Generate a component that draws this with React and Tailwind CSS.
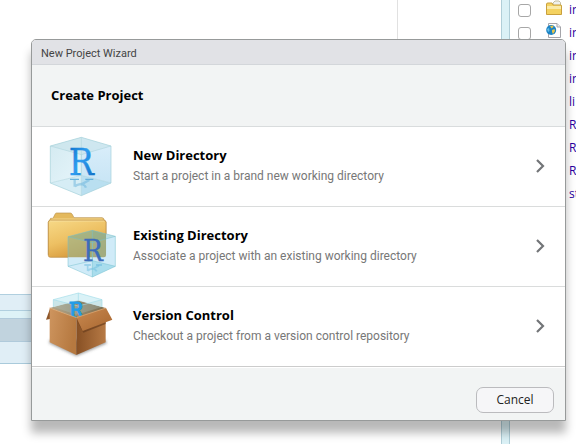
import React from 'react';

const R_FONT = '"DejaVu Serif Condensed", "DejaVu Serif", serif';

function CubeIcon() {
  return (
    <svg className="h-[79px] w-20 shrink-0" viewBox="30 21 240 237" aria-hidden="true">
      <defs>
        <linearGradient id="rBlue" x1="0" y1="0" x2="1" y2="1">
          <stop offset="0" stopColor="#0a6cc4" />
          <stop offset=".45" stopColor="#2f9df0" />
          <stop offset="1" stopColor="#0a68bd" />
        </linearGradient>
        <linearGradient id="cubeLeft" x1="0" y1="0" x2="1" y2="1">
          <stop offset="0" stopColor="#d3eaf1" />
          <stop offset="1" stopColor="#e6f5fa" />
        </linearGradient>
        <linearGradient id="cubeRight" x1="0" y1="0" x2="0" y2="1">
          <stop offset="0" stopColor="#dceffb" />
          <stop offset="1" stopColor="#c8e5f5" />
        </linearGradient>
      </defs>
      <path d="M61 78 154 52 154 166 61 189Z" fill="url(#cubeLeft)" />
      <path d="M154 52 243 78 243 189 154 166Z" fill="url(#cubeRight)" />
      <path d="M61 189 154 166 154 227Z" fill="#d6edf5" />
      <path d="M154 166 243 189 154 227Z" fill="#b9dff0" />
      <path d="M61 78 154 52 243 78 154 104Z" fill="#c8e3e9" fillOpacity=".6" />
      <path d="M61 78 154 104 243 78M154 104V227M61 189 154 166 243 189M154 52V166" fill="none" stroke="#9fcbd5" strokeWidth="2" strokeOpacity=".65" />
      <path d="M154 52 243 78V189L154 227 61 189V78Z" fill="none" stroke="#a3d0da" strokeWidth="2" />
      <path d="M120 178H147M166 178H190" stroke="#4fa5d6" strokeWidth="4" strokeOpacity=".8" />
      <path d="M134 180V200M178 180 156 192Q138 194 134 200M156 192Q166 196 168 203" fill="none" stroke="#69b4dc" strokeWidth="7" strokeOpacity=".5" />
      <text x="116" y="166" fontSize="111" fontFamily={R_FONT} fill="url(#rBlue)" stroke="url(#rBlue)" strokeWidth="1">R</text>
    </svg>
  );
}

function FolderCubeIcon() {
  return (
    <svg className="h-[79px] w-20 shrink-0" viewBox="30 21 240 237" aria-hidden="true">
      <defs>
        <linearGradient id="folder" x1="0" y1="0" x2=".5" y2="1">
          <stop offset="0" stopColor="#f7d987" />
          <stop offset=".55" stopColor="#edc063" />
          <stop offset="1" stopColor="#d6983a" />
        </linearGradient>
      </defs>
      <path d="M58 62 62 55H69L76 41Q77 39 80 39H121Q124 39 126 42L132 53H216Q221 53 223 60L228 66V164H55V66Z" fill="#e4b95d" stroke="#bb944f" strokeWidth="2" />
      <path d="M64 57H218" stroke="#fae6a8" strokeWidth="2" />
      <rect x="55" y="61" width="173" height="111" rx="6" fill="url(#folder)" stroke="#b88a42" strokeWidth="2" />
      <path d="M60 63H223" stroke="#fbe9b0" strokeWidth="2" />
      <path d="M114 110 187 91 228 102V166Q228 172 222 172H114Z" fill="#9fb287" fillOpacity=".7" />
      <path d="M187 91 228 102V172H187Z" fill="#8fae97" fillOpacity=".4" />
      <path d="M228 102 256 109V199L187 231 114 199V172H222Q228 172 228 166Z" fill="#cdeaf8" fillOpacity=".95" />
      <path d="M187 182 256 199 187 231Z" fill="#a9dded" />
      <path d="M114 110 187 91 256 109 187 128Z" fill="#6aaa9b" fillOpacity=".2" />
      <path d="M187 91 256 109V199L187 231 114 199V110ZM114 110 187 128 256 109M187 91V182M114 199 187 182 256 199M187 128V231" fill="none" stroke="#75c0cf" strokeWidth="2" strokeOpacity=".75" />
      <path d="M163 195H183M198 195H216" stroke="#55aed8" strokeWidth="3" strokeOpacity=".8" />
      <path d="M173 197V213M207 197 190 206Q177 207 173 213M190 206Q198 209 200 214" fill="none" stroke="#6dbde0" strokeWidth="5" strokeOpacity=".5" />
      <text x="159" y="182" fontSize="88" fontFamily={R_FONT} fill="#3d6cba" stroke="#3d6cba" strokeWidth="1">R</text>
    </svg>
  );
}

function BoxIcon() {
  return (
    <svg className="h-[79px] w-20 shrink-0" viewBox="30 21 240 237" aria-hidden="true">
      <defs>
        <linearGradient id="boxLeft" x1="0" y1="0" x2="1" y2=".3">
          <stop offset="0" stopColor="#ce955f" />
          <stop offset="1" stopColor="#b67940" />
        </linearGradient>
        <linearGradient id="boxRight" x1="0" y1="0" x2="1" y2="0">
          <stop offset="0" stopColor="#875024" />
          <stop offset="1" stopColor="#b77a45" />
        </linearGradient>
        <linearGradient id="boxFlap" x1="0" y1="0" x2="1" y2="1">
          <stop offset="0" stopColor="#c98a51" />
          <stop offset="1" stopColor="#a8662f" />
        </linearGradient>
        <linearGradient id="boxInside" x1="0" y1="0" x2="1" y2="0">
          <stop offset="0" stopColor="#b5a78b" />
          <stop offset="1" stopColor="#796c4f" />
        </linearGradient>
        <filter id="softShadow" x="-20%" y="-20%" width="140%" height="140%">
          <feGaussianBlur stdDeviation="4" />
        </filter>
      </defs>
      <path d="M57 189 139 228 230 190 226 180 60 180Z" fill="#555" fillOpacity=".6" filter="url(#softShadow)" />
      <path d="M61 83 48 119 60 117Z" fill="#8d5529" />
      <path d="M59 84 144 60 229 85 139 115Z" fill="url(#boxInside)" />
      <path d="M70 59 145 39 216 59V81L145 62 70 81Z" fill="#d3f0f6" fillOpacity=".85" />
      <path d="M70 59 145 78 216 59V81L139 104 70 81Z" fill="#a8cbcb" fillOpacity=".3" />
      <path d="M70 81V59L145 39 216 59V81M70 59 145 78 216 59M145 39V62" fill="none" stroke="#a2dce8" strokeWidth="2" />
      <text x="116" y="114" fontSize="66" fontFamily={R_FONT} fill="#229ce8" stroke="#229ce8" strokeWidth="3">R</text>
      <path d="M59 83 139 113V225L59 187Z" fill="url(#boxLeft)" />
      <path d="M139 113 227 84V187L139 225Z" fill="url(#boxRight)" />
      <path d="M139 118 160 158 227 132V124L158 148Z" fill="#6a3d1c" fillOpacity=".7" />
      <path d="M139 112 228 84 247 119 158 153Z" fill="url(#boxFlap)" />
      <path d="M59 84 139 113 228 84" fill="none" stroke="#e1b17d" strokeWidth="2" />
    </svg>
  );
}

function Chevron() {
  return (
    <svg className="mr-[19px] h-4 w-3 shrink-0" viewBox="0 0 12 16" aria-hidden="true">
      <path d="M3 2 9 8 3 14" fill="none" stroke="#737578" strokeWidth="2.2" />
    </svg>
  );
}

function SmallFolder() {
  return (
    <svg className="h-4 w-4 shrink-0" viewBox="0 0 16 16" aria-hidden="true">
      <path d="M7 3 9 1H13L14.500 2.500V12H7Z" fill="#eef0ed" stroke="#c5bd9e" />
      <path d="M.5 14.500V4Q.5 3 2 3H6L7 5H15Q15.500 5 15.500 6V14.500Z" fill="#f4d260" stroke="#c9a03d" />
      <path d="M1 6H15V9H1Z" fill="#faeaa8" />
    </svg>
  );
}

function HtmlFile() {
  return (
    <svg className="h-4 w-4 shrink-0" viewBox="0 0 16 16" aria-hidden="true">
      <path d="M2.500 .5H11L14.500 4V14.500H2.500Z" fill="#fff" stroke="#a5a5aa" />
      <path d="M11 .5V4H14.500" fill="#eee" stroke="#a5a5aa" />
      <circle cx="5.200" cy="7" r="5" fill="#1b83c5" />
      <path d="M4 3 7 2.500 7.500 4 5.500 5.500ZM6 7 8.500 6 9 8 7 11 6 9Z" fill="#e4c44c" />
      <path d="M1 6 3 5 3.500 8 2 9Z" fill="#63bde8" />
    </svg>
  );
}

const files = [
  { name: 'in', Icon: SmallFolder },
  { name: 'in', Icon: HtmlFile },
  { name: 'in' },
  { name: 'in' },
  { name: 'li' },
  { name: 'R' },
  { name: 'R' },
  { name: 'R' },
  { name: 'st' },
];

const options = [
  { title: 'New Directory', text: 'Start a project in a brand new working directory', Icon: CubeIcon },
  { title: 'Existing Directory', text: 'Associate a project with an existing working directory', Icon: FolderCubeIcon },
  { title: 'Version Control', text: 'Checkout a project from a version control repository', Icon: BoxIcon },
];

function Workspace() {
  return (
    <div className="flex h-screen">
      <div className="flex min-w-0 flex-1 flex-col">
        <div className="flex h-[294px] shrink-0">
          <div className="flex-1" />
          <div className="w-[104px] border-l border-[#e1e1e1]" />
        </div>
        <div className="h-[17px] shrink-0 border-y border-[#b0cfdf] bg-[#e0eef6]" />
        <div className="h-[7px] shrink-0 bg-[#ddf2f7]" />
        <div className="h-6 shrink-0 border-y border-[#b0cadb] bg-[#c1d3de]" />
        <div className="h-[22px] shrink-0 border-b border-[#a9cadb] bg-[#e0eef6]" />
      </div>
      <div className="w-[9px] shrink-0 border-x border-[#b0ced8] bg-[#dbf1f6]" />
      <ul className="w-[66px] shrink-0 overflow-hidden">
        {files.map(({ name, Icon }, i) => (
          <li key={i} className="flex h-[23px] items-start pl-2">
            <input type="checkbox" aria-label={name} className="mt-1 h-[13px] w-[13px] shrink-0 appearance-none rounded-[3px] border border-[#a7a7a7] bg-white" />
            <span className="ml-[15px] h-4 w-[23px] shrink-0">{Icon && <Icon />}</span>
            <a href="#file" className="text-xs leading-5 text-[#2c00a0]">{name}</a>
          </li>
        ))}
      </ul>
    </div>
  );
}

export default function App() {
  return (
    <div className="relative h-screen overflow-hidden bg-white font-['Open_Sans','Noto_Sans',sans-serif]">
      <Workspace />
      <section role="dialog" aria-labelledby="wizard-title" className="absolute top-[39px] right-[10px] left-[31px] rounded-t-[5px] border border-[#979a9a] bg-white shadow-[0_12px_10px_rgba(0,0,0,0.28)]">
        <header id="wizard-title" className="h-[25px] rounded-t-[4px] border-b border-[#d3d6da] bg-[#e1e2e6] pl-[9px] font-['Roboto','Open_Sans',sans-serif] text-[11px] leading-[27px] text-[#444]">
          New Project Wizard
        </header>
        <h1 className="h-[62px] border-b border-[#d9dcdd] bg-[#f2f4f4] pl-[19px] text-[13px] leading-[60px] font-bold text-black">
          Create Project
        </h1>
        {options.map(({ title, text, Icon }) => (
          <button key={title} type="button" className="flex h-20 w-full items-center border-b border-[#dadcdc] pb-px pl-2 text-left last-of-type:border-[#ccc]">
            <Icon />
            <span className="ml-[13px] min-w-0 flex-1">
              <span className="block text-[13px] leading-5 font-bold text-black">{title}</span>
              <span className="block font-['Roboto','Open_Sans',sans-serif] text-xs leading-[22px] text-[#777]">{text}</span>
            </span>
            <Chevron />
          </button>
        ))}
        <footer className="flex justify-end border-t border-white bg-[#f2f4f4] pt-[19px] pr-[11px] pb-[7px]">
          <button type="button" className="h-[26px] w-[78px] rounded-[7px] border border-[#bbbbbe] bg-[#f6f6f8] text-xs text-[#222]">
            Cancel
          </button>
        </footer>
      </section>
    </div>
  );
}
